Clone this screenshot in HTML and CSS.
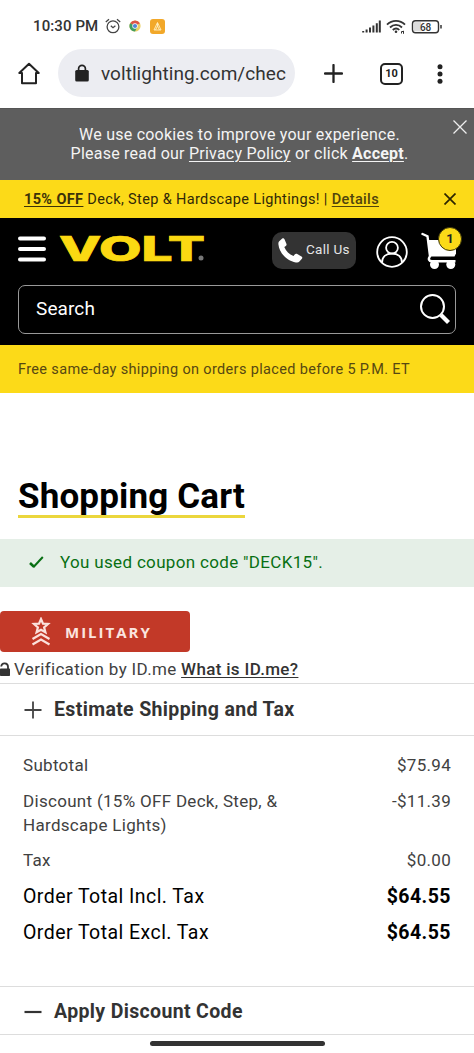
FILE: index.html
```html
<!DOCTYPE html>
<html lang="en">
<head>
<meta charset="utf-8">
<title>Shopping Cart</title>
<link rel="stylesheet" href="styles.css">
</head>
<body>
<div class="status">
  <span class="time">10:30 PM</span>
  <svg class="alarm" width="16" height="16" viewBox="0 0 16 16" fill="none" stroke="#444" stroke-width="1.3"><circle cx="8" cy="8.8" r="5.9"/><path d="M5.8 7.8 8 9.7l2.4-2M.8 4 4 1.2M15.2 4 12 1.2"/></svg>
  <svg class="chrome" width="12" height="12" viewBox="0 0 12 12"><circle cx="6" cy="6" r="5.6" fill="#e9cf63"/><path d="M6 6 1.2 3.2A5.6 5.6 0 0 1 10.9 3.2Z" fill="#dc5549"/><path d="M6 6 1.2 3.2A5.6 5.6 0 0 0 6 11.6L7.500 8.500Z" fill="#3f9e62"/><circle cx="6" cy="6" r="2.7" fill="#fff"/><circle cx="6" cy="6" r="2.1" fill="#4f86d8"/></svg>
  <svg class="warn" width="15" height="15" viewBox="0 0 15 15"><rect width="15" height="15" rx="3" fill="#f2a829"/><path d="M7.500 3.500 4 11h7Z M5.500 11l2-4 2 4M7.500 4v3" fill="none" stroke="#fff0c4" stroke-width=".9"/></svg>
  <svg class="signals" width="82" height="17" viewBox="0 0 82 17" fill="none" stroke="#333"><path stroke-width="2" d="M2.200 14.500v-1.500M5.600 14.500v-3M9 14.500V9.500M12.400 14.500V7.500M15.800 14.500V5.200M18.800 14.500V2.500"/><path stroke-width="1.800" d="M26 6.700c5-5.200 13-5.200 18 0M29 9.500c3.500-3.500 8.500-3.500 12 0M31.800 12c2-2 4.600-2 6.500 0"/><circle cx="35" cy="13.700" r="1.300" fill="#333" stroke="none"/><path stroke-width="1" d="M40.500 15.500v-2h2.500M42.500 12.800v3"/><rect x="51.500" y="2.700" width="26" height="12" rx="3" stroke-width="1.400"/><rect x="53" y="4.100" width="7" height="9.200" fill="#ddd" stroke="none"/><path stroke-width="1.500" d="M80 7v3.500"/><text x="64.600" y="12.500" class="battery">68</text></svg>
</div>
<div class="browser">
  <svg class="home" width="22" height="23" viewBox="0 0 22 23" fill="none" stroke="#222" stroke-width="2" stroke-linejoin="round"><path d="M1.300 11 11 1.800 20.700 11H18v10.200H4V11Z"/></svg>
  <div class="url"><svg width="14" height="18" viewBox="0 0 14 18"><path d="M3.600 7V4.800a3.400 3.400 0 0 1 6.800 0V7" fill="none" stroke="#222" stroke-width="1.700"/><rect x=".2" y="6" width="13.600" height="11.500" rx="1.500" fill="#222"/></svg><span class="address">voltlighting.com/chec</span></div>
  <svg class="plus" width="19" height="19" viewBox="0 0 19 19" stroke="#222" stroke-width="2.300" stroke-linecap="round"><path d="M9.500 1v17M1 9.500h17"/></svg>
  <span class="tabs">10</span>
  <svg class="dots" width="6" height="20" viewBox="0 0 6 20" fill="#222"><circle cx="3" cy="2.700" r="2.500"/><circle cx="3" cy="10" r="2.500"/><circle cx="3" cy="17.300" r="2.500"/></svg>
</div>
<div class="cookies">
  <p>We use cookies to improve your experience.<br>Please read our <u>Privacy Policy</u> or click <b><u>Accept</u></b>.</p>
  <svg class="cookie-close" width="14" height="14" viewBox="0 0 14 14" stroke="#eee" stroke-width="1.300"><path d="m.5.500 13 13M13.500.500l-13 13"/></svg>
</div>
<div class="promo"><span class="promo-text"><b><u>15% OFF</u></b> Deck, Step &amp; Hardscape Lightings! | <u class="details">Details</u></span>
  <svg width="12" height="12" viewBox="0 0 12 12" stroke="#2c2600" stroke-width="1.700"><path d="m.5.500 11 11M11.500.500l-11 11"/></svg>
</div>
<header class="header">
  <div class="brandbar">
    <svg class="menu" width="28" height="26" viewBox="0 0 28 26" stroke="#fff" stroke-width="4" stroke-linecap="round"><path d="M2 2.500h24M2 13h24M2 23.500h24"/></svg>
    <svg class="logo" width="150" height="52" viewBox="-3 -12 150 52"><text x="-1" y="26.500" textLength="146" lengthAdjust="spacingAndGlyphs" class="logo-text">VOLT</text><circle cx="141" cy="24" r="2.500" fill="#777"/></svg>
    <a class="call"><svg width="25" height="25" viewBox="0 0 25 25"><path d="M1.200 3.200 4.200.600c1-.7 1.800-.4 2.300.7l2 4.700c.3 1-.1 1.700-1 2.200l-1.200.9c1.800 4.500 4.800 7.300 9.200 8.800l1.200-1.300c.7-.8 1.500-1 2.500-.5l4.300 2.300c1 .6 1 1.500.4 2.300l-2.500 2.900c-.8.900-1.900 1-3.500.8C8.500 23 1.200 14.500.4 6.200c-.1-1.300.1-2.300.8-3Z" fill="#fff"/></svg><span>Call Us</span></a>
    <svg class="user" width="32" height="32" viewBox="0 0 32 32" fill="none" stroke="#fff" stroke-width="1.800"><circle cx="16" cy="16" r="14.800"/><circle cx="16" cy="11.800" r="5.900"/><path d="M6 26.800c0-6 4-9.300 10-9.300s10 3.300 10 9.300"/></svg>
    <div class="cart"><svg width="36" height="38" viewBox="0 0 36 38"><path d="M1.500 2l5 2.200L9 24" fill="none" stroke="#fff" stroke-width="2.400" stroke-linecap="round"/><path d="M7 8h28v13.500L33.500 24.500H9Z" fill="#fff"/><path d="M9.500 23.800C6.500 27 8 29.300 11 29.300h23.500" fill="none" stroke="#fff" stroke-width="2.400"/><circle cx="13.500" cy="32.500" r="4.500" fill="#fff"/><circle cx="29.800" cy="32.500" r="4.500" fill="#fff"/></svg><span class="badge">1</span></div>
  </div>
  <div class="search"><span>Search</span><svg width="30" height="30" viewBox="0 0 30 30" fill="none" stroke="#fff"><circle cx="12.500" cy="12.500" r="11.500" stroke-width="2"/><path d="m21 21 7.500 7.500" stroke-width="4.200"/></svg></div>
</header>
<div class="shipping"><span>Free same-day shipping on orders placed before 5 P.M. ET</span></div>
<main>
  <h1>Shopping Cart</h1>
  <div class="coupon"><svg width="15" height="13" viewBox="0 0 15 13" fill="none" stroke="#086f13"><path stroke-width="2.600" d="m1 7 4 3.800"/><path stroke-width="2" d="M4.300 11.300 13.800 1"/></svg><span>You used coupon code "DECK15".</span></div>
  <div class="military"><svg width="20" height="29" viewBox="0 0 20 29" fill="none" stroke="#fbe1dc" stroke-width="2.200"><path d="m10 2 2 4.600 5 .4-3.900 3.300 1.300 5L10 12.700l-4.400 2.600 1.300-5L3 7l5-.4Z"/><path d="m1.500 22 8.500-5 8.500 5M1.500 27.500l8.500-5 8.500 5"/></svg><span>MILITARY</span></div>
  <div class="verify"><svg width="10" height="15" viewBox="0 0 10 15"><path d="M1.200 4.500C1.800 0 8 .500 8 4.700V7" fill="none" stroke="#333" stroke-width="1.800"/><rect y="6.500" width="10" height="7.500" rx=".7" fill="#333"/></svg><span>Verification by ID.me <u>What is ID.me?</u></span></div>
  <section class="fold"><svg width="18" height="18" viewBox="0 0 18 18" stroke="#444" stroke-width="1.800"><path d="M9 .500v17M.500 9h17"/></svg><h2>Estimate Shipping and Tax</h2></section>
  <div class="totals">
    <div class="row"><span>Subtotal</span><span>$75.94</span></div>
    <div class="row two"><span>Discount (15% OFF Deck, Step, &amp;<br>Hardscape Lights)</span><span>-$11.39</span></div>
    <div class="row"><span>Tax</span><span>$0.00</span></div>
    <div class="row total"><span>Order Total Incl. Tax</span><b>$64.55</b></div>
    <div class="row total"><span>Order Total Excl. Tax</span><b>$64.55</b></div>
  </div>
  <section class="fold apply"><svg width="18" height="18" viewBox="0 0 18 18" stroke="#333" stroke-width="2.200"><path d="M.500 9h17"/></svg><h2>Apply Discount Code</h2></section>
</main>
<div class="homebar"></div>
</body>
</html>
```
FILE: styles.css
```css
* { box-sizing: border-box; }
body { margin: 0; width: 474px; height: 1053px; overflow: hidden; background: #fff; color: #414141; font-family: Roboto, sans-serif; font-size: 16px; }
p, h1, h2 { margin: 0; }
svg { display: block; flex: none; }
span, h1, h2, b { white-space: nowrap; }
u { text-underline-offset: 2px; text-decoration-thickness: 1px; }
.status { height: 52px; display: flex; align-items: center; padding-left: 33px; }
.time { font-size: 15px; font-weight: 500; letter-spacing: .1px; color: #333; width: 72px; }
.chrome { margin-left: 8px; }
.warn { margin-left: 9px; }
.signals { margin-left: auto; margin-right: 31px; }
.battery { font: 500 10px Roboto, sans-serif; text-anchor: middle; fill: #333; stroke: none; }
.browser { height: 56px; display: flex; align-items: flex-start; padding-left: 18px; }
.home { margin-top: 10px; }
.url { width: 237px; height: 48px; margin: -3px 0 0 18px; border-radius: 24px; background: #ecedf2; display: flex; align-items: center; padding-left: 17px; color: #333; }
.address { margin-left: 12px; font-size: 19px; width: 187px; overflow: hidden; letter-spacing: .05px; line-height: 28px; padding-top: 1px; }
.plus { margin: 12px 0 0 29px; }
.tabs { width: 23px; height: 22px; margin: 11px 0 0 37px; border: 2px solid #222; border-radius: 5px; font-size: 11px; font-weight: 700; line-height: 18px; text-align: center; color: #222; }
.dots { margin: 12px 0 0 34px; }
.cookies { height: 72px; background: #5e5e5e; color: #f4f4f4; position: relative; text-align: center; padding: 16px 0 0 5px; border-top: 1px solid #555; font-size: 16px; line-height: 19px; letter-spacing: .23px; }
.cookie-close { position: absolute; left: 453px; top: 11px; }
.promo { height: 38px; background: #fcda18; color: #302808; display: flex; align-items: center; padding-left: 24px; font-size: 14.500px; letter-spacing: .36px; }
.promo-text { width: 420px; }
.promo b { font-weight: 700; color: #3c3209; }
.details { font-weight: 500; color: #51450c; }
.header { height: 127px; background: #000; padding: 13px 18px 0; }
.brandbar { display: flex; align-items: flex-start; height: 54px; }
.menu { margin-top: 5px; }
.logo { margin: -9px -1px 0 11px; }
.logo-text { font: 800 34px/1 Inter, sans-serif; fill: #fbd912; stroke: #fbd912; stroke-width: .7px; }
.call { flex: none; width: 84px; height: 37px; margin: 1px 0 0 66px; border-radius: 10px; background: #333; color: #e5e5e5; font-size: 13.500px; letter-spacing: .3px; display: flex; padding: 6px 0 0 6px; }
.call span { margin: 3px 0 0 3px; line-height: 16px; }
.user { margin: 5px 0 0 20px; }
.cart { flex: none; position: relative; margin: 1px 0 0 13px; width: 36px; }
.badge { position: absolute; left: 17px; top: -5px; width: 24px; height: 24px; border-radius: 50%; background: #fbda18; color: #222; border: 1px solid #3b350a; font-size: 13px; font-weight: 700; line-height: 22px; text-align: center; }
.search { height: 49px; border: 1px solid #999; border-radius: 7px; display: flex; align-items: center; justify-content: space-between; padding: 0 5px 2px 17px; color: #fff; font-size: 19px; letter-spacing: .1px; }
.shipping { height: 48px; background: #fcda18; color: #574812; display: flex; align-items: center; padding-left: 18px; font-size: 14.500px; letter-spacing: .35px; }
h1 { width: max-content; margin: 85px 0 0 18px; height: 40px; border-bottom: 3px solid #ebd63c; font-size: 35px; line-height: 38px; color: #000; font-weight: 700; letter-spacing: .15px; }
.coupon { margin-top: 21px; height: 48px; background: #e5efe7; color: #086f13; display: flex; align-items: center; padding: 0 0 2px 29px; gap: 16px; font-size: 17px; letter-spacing: .33px; }
.military { width: 190px; height: 41px; margin-top: 24px; border-radius: 4px; background: #c23928; color: #fbe4df; display: flex; align-items: center; padding-left: 31px; font: 700 15px "Open Sans", sans-serif; letter-spacing: 2px; gap: 14px; }
.verify { height: 31px; display: flex; align-items: center; gap: 4px; padding-top: 3px; font-size: 17px; letter-spacing: .33px; }
.verify u { font-weight: 500; color: #333; }
.fold { height: 53px; border-top: 1px solid #ddd; border-bottom: 1px solid #ddd; display: flex; align-items: center; padding-left: 24px; gap: 12px; color: #333; }
h2 { font-size: 19.500px; font-weight: 700; letter-spacing: .35px; }
.totals { height: 250px; padding: 18px 23px 0; letter-spacing: .3px; line-height: 23.500px; }
.row { display: flex; justify-content: space-between; height: 36px; font-size: 17px; }
.row.two { height: 59px; }
.row.total { color: #000; font-size: 19.500px; height: 35.500px; letter-spacing: .45px; }
.apply { height: 49px; padding-top: 2px; }
.homebar { width: 175px; height: 5px; border-radius: 3px; background: #333; margin: 6px auto 0; }
```
